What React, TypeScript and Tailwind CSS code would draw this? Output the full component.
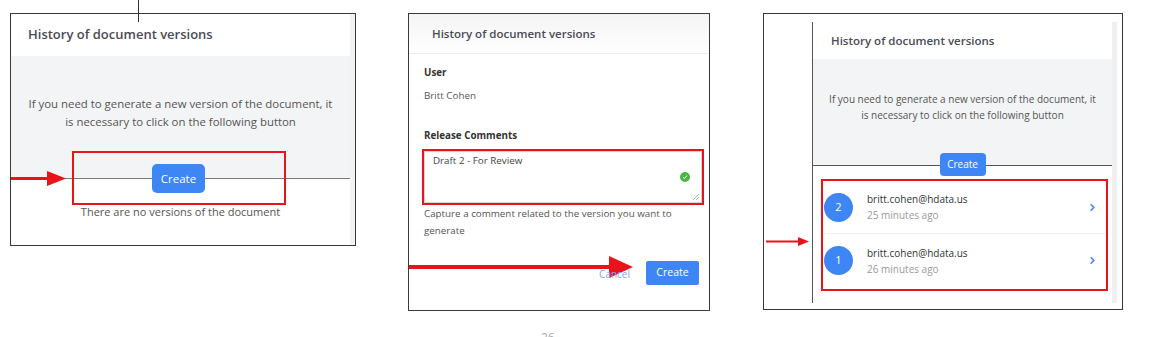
import { ChevronRight } from "lucide-react";

const font = { fontFamily: '"Open Sans", "Noto Sans", sans-serif' };

function RedArrow({ len, thick, headW, headH }: { len: number; thick: number; headW: number; headH: number }) {
  return (
    <svg width={len + headW} height={headH} className="block">
      <rect x={0} y={(headH - thick) / 2} width={len + 2} height={thick} fill="#e8141a" />
      <polygon points={`${len},0 ${len + headW},${headH / 2} ${len},${headH}`} fill="#e8141a" />
    </svg>
  );
}

function PanelOne() {
  return (
    <div className="relative w-[346px] h-[233px] border border-[#3a3a3a] bg-white">
      <div className="flex h-full border-r-[5px] border-[#f2f2f2]">
        <div className="flex flex-col flex-1">
          <div className="h-[42px] flex items-center pl-[17px] text-[13px] font-semibold text-[#4a4b57]">
            History of document versions
          </div>
          <div className="h-[122px] bg-[#f3f4f6] flex flex-col items-center pt-[39px] text-[11.4px] leading-[18px] text-[#555] text-center">
            <p>If you need to generate a new version of the document, it</p>
            <p>is necessary to click on the following button</p>
          </div>
          <div className="border-t border-[#7a7a7a] flex flex-col items-center">
            <button className="-mt-[15px] -ml-[4px] w-[53px] h-[29px] rounded-[5px] bg-[#3f86f5] text-white text-[11.5px]">Create</button>
            <p className="mt-[11px] text-[11px] text-[#555]">There are no versions of the document</p>
          </div>
        </div>
      </div>
      <div className="absolute left-[61px] top-[137px] w-[214px] h-[54px] border-[2.5px] border-[#e8141a]" />
      <div className="absolute left-0 top-[157px]">
        <RedArrow len={36} thick={3} headW={19} headH={15} />
      </div>
    </div>
  );
}

function PanelTwo() {
  return (
    <div className="relative w-[302px] h-[298px] border border-[#3a3a3a] bg-white">
      <div className="h-[40px] flex items-center pl-[23px] text-[11.5px] font-semibold text-[#4a4b57] border-b border-[#eeeeee] bg-gradient-to-b from-[#f4f4f4] to-white">
        History of document versions
      </div>
      <div className="pl-[15px] pr-[5px] text-[9.8px] text-[#555]">
        <p className="mt-[12px] font-bold text-[#333]">User</p>
        <p className="mt-[8px]">Britt Cohen</p>
        <p className="mt-[26px] font-bold text-[#333]">Release Comments</p>
        <div className="relative mt-[5px] -ml-[2px] h-[56px] border-[2px] border-[#e8141a] bg-white">
          <div className="absolute inset-0 border border-[#d6d6d6]" />
          <p className="pl-[9px] pt-[3px] text-[#444]">Draft 2 - For Review</p>
          <div className="absolute right-[12px] top-[21px] w-[10px] h-[10px] rounded-full bg-[#4bb543] flex items-center justify-center">
            <svg width="6" height="6" viewBox="0 0 6 6">
              <path d="M1 3.2 L2.5 4.5 L5 1.5" stroke="white" strokeWidth="1" fill="none" />
            </svg>
          </div>
          <svg className="absolute right-[2px] bottom-[2px]" width="8" height="8" viewBox="0 0 8 8">
            <path d="M1 7 L7 1 M4 7 L7 4" stroke="#999" strokeWidth="0.8" />
          </svg>
        </div>
        <p className="mt-0 leading-[17px]">Capture a comment related to the version you want to generate</p>
        <div className="mt-[22px] flex items-center justify-end gap-[16px] pr-[5px]">
          <span className="relative z-10 mt-[3px] text-[#7ea4ee] text-[10px]">Cancel</span>
          <button className="w-[53px] h-[24px] rounded-[2px] bg-[#3f86f5] text-white text-[10.5px]">Create</button>
        </div>
      </div>
      <div className="absolute left-0 top-[242px]">
        <RedArrow len={200} thick={4} headW={24} headH={22} />
      </div>
    </div>
  );
}

function VersionRow({ n, email, ago, last }: { n: number; email: string; ago: string; last?: boolean }) {
  return (
    <div className={`flex items-center h-[53px] pl-[1px] pr-[8px] ${last ? "" : "border-b border-[#f0f0f0]"}`}>
      <div className="w-[29px] h-[29px] rounded-full bg-[#3f86f5] text-white text-[11px] flex items-center justify-center">{n}</div>
      <div className="ml-[14px] flex-1 text-[10px] leading-[16px]">
        <p className="text-[#333]">{email}</p>
        <p className="text-[#999]">{ago}</p>
      </div>
      <ChevronRight size={11} strokeWidth={3.5} className="text-[#3f86f5]" />
    </div>
  );
}

function PanelThree() {
  return (
    <div className="relative w-[360px] h-[297px] border border-[#3a3a3a] bg-white">
      <div className="pt-[8px] pl-[48px] pr-[5px] h-full">
        <div className="flex h-[281px] border-l border-[#555]">
          <div className="flex flex-col flex-1">
            <div className="h-[37px] flex items-center pl-[18px] text-[11.5px] font-semibold text-[#4a4b57]">
              History of document versions
            </div>
            <div className="h-[106px] bg-[#f3f4f6] flex flex-col items-center pt-[32px] text-[10px] leading-[16px] text-[#555] text-center">
              <p>If you need to generate a new version of the document, it</p>
              <p>is necessary to click on the following button</p>
            </div>
            <div className="border-t border-[#555] flex flex-col items-center">
              <button className="-mt-[13px] w-[46px] h-[23px] rounded-[4px] bg-[#3f86f5] text-white text-[10px]">Create</button>
              <div className="self-stretch mt-[3px] ml-[8px] mr-[4px] border-[2px] border-[#e8141a] pb-[2px]">
                <VersionRow n={2} email="britt.cohen@hdata.us" ago="25 minutes ago" />
                <VersionRow n={1} email="britt.cohen@hdata.us" ago="26 minutes ago" last />
              </div>
            </div>
          </div>
          <div className="w-[5px] bg-[#f0f0f0]" />
        </div>
      </div>
      <div className="absolute left-[2px] top-[223px]">
        <RedArrow len={32} thick={2} headW={11} headH={9} />
      </div>
    </div>
  );
}

export default function App() {
  return (
    <div className="relative w-[1149px] h-[337px] overflow-hidden bg-white" style={font}>
      <div className="flex items-start pt-[13px] pl-[10px]">
        <PanelOne />
        <div className="ml-[52px]">
          <PanelTwo />
        </div>
        <div className="ml-[53px]">
          <PanelThree />
        </div>
      </div>
      <div className="absolute left-[138px] top-0 w-px h-[22px] bg-[#333]" />
      <div className="absolute left-[541px] top-[329px] text-[12px] text-[#aaa]">26</div>
    </div>
  );
}
